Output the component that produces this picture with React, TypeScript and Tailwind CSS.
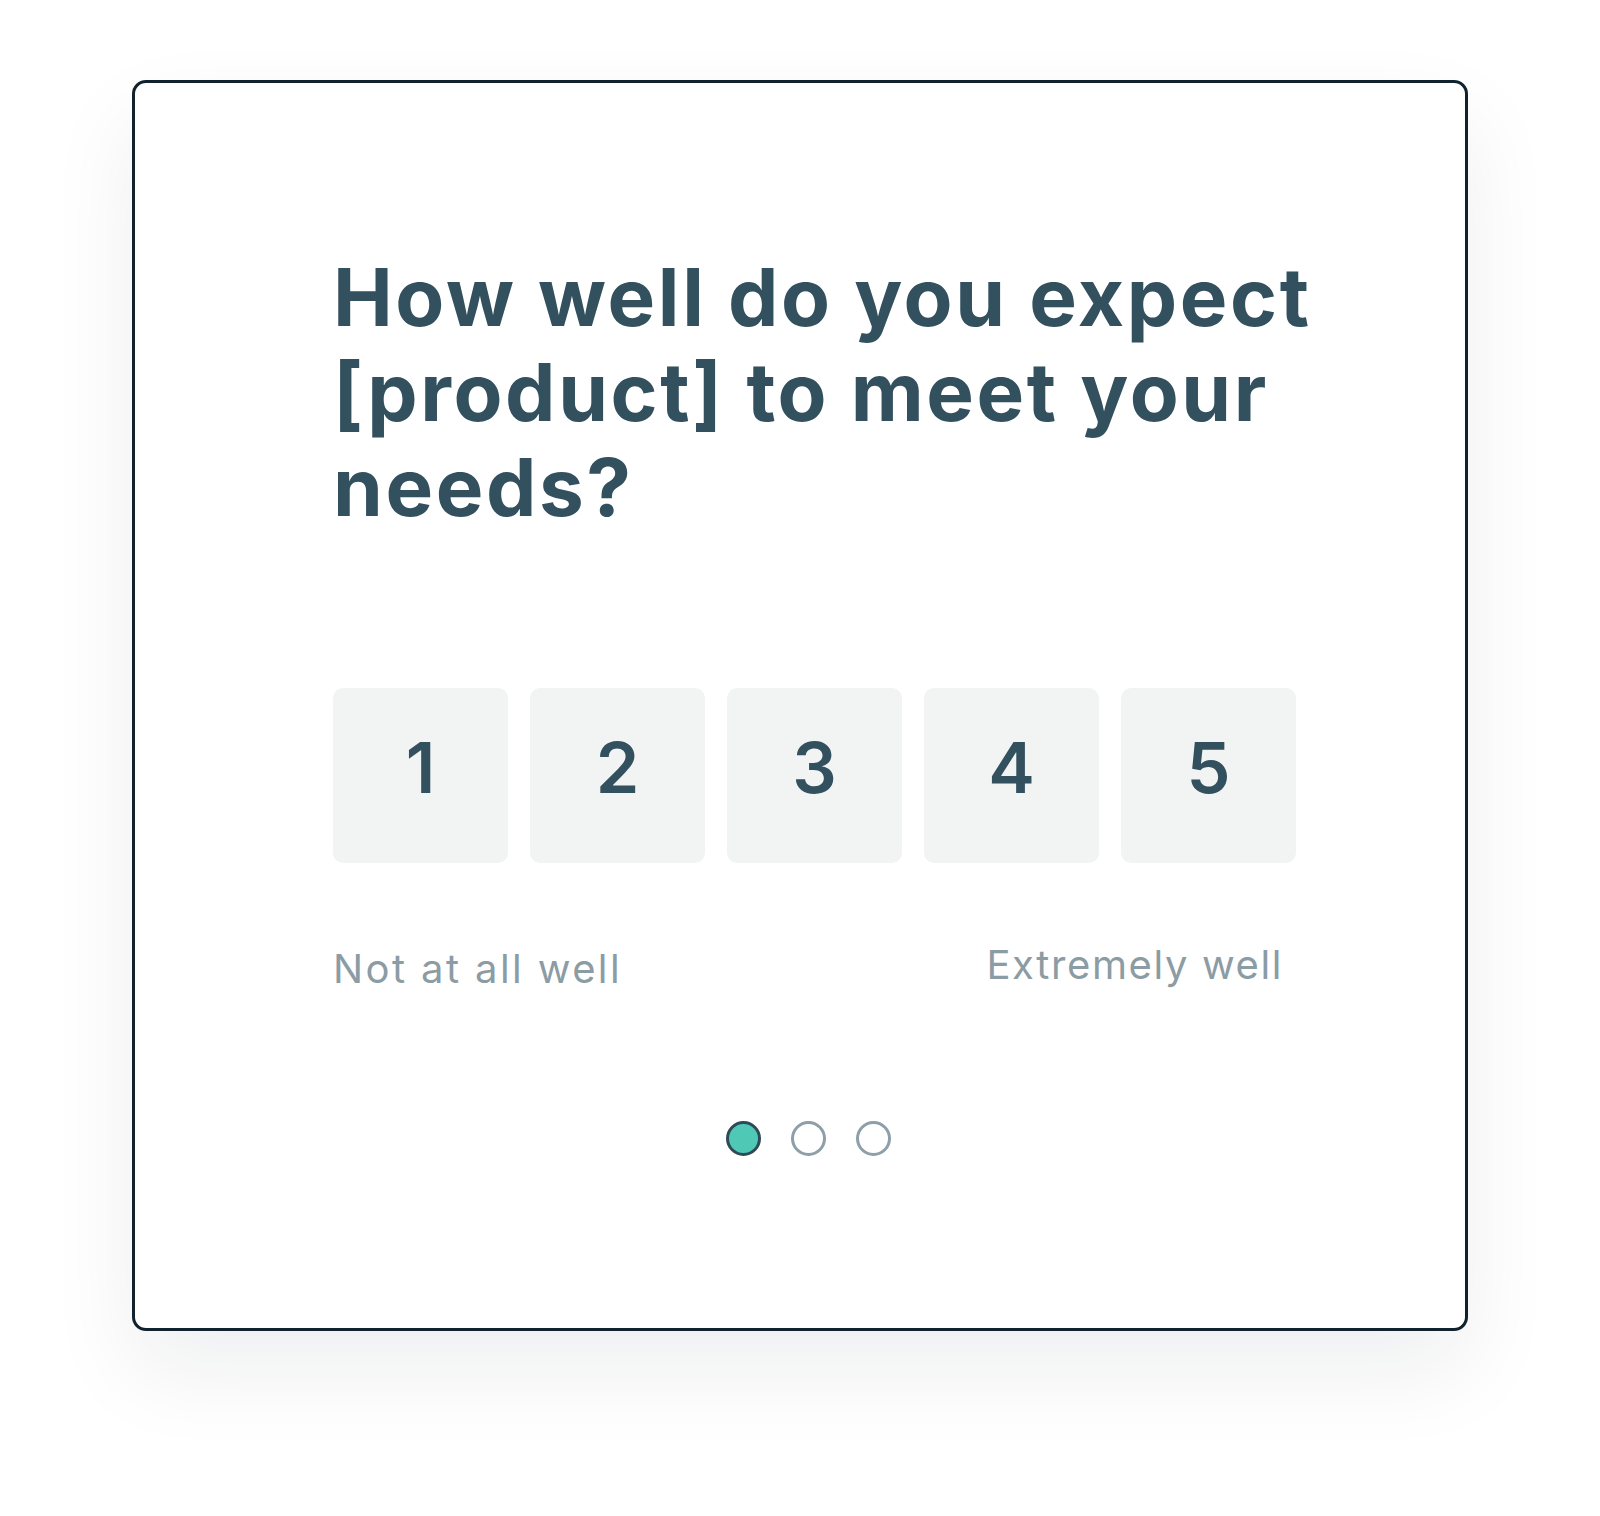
const scale = [1, 2, 3, 4, 5];

function Dots({ active = 0, count = 3 }: { active?: number; count?: number }) {
  return (
    <div className="flex items-center justify-center gap-[30px]">
      {Array.from({ length: count }).map((_, i) =>
        i === active ? (
          <span key={i} className="block h-[35px] w-[35px] rounded-full border-[3px] border-[#2e4a58] bg-[#4fc8b6]" />
        ) : (
          <span key={i} className="block h-[35px] w-[35px] rounded-full border-[3px] border-[#8d9fa8] bg-white" />
        ),
      )}
    </div>
  );
}

export default function App() {
  return (
    <div className="min-h-[1516px] w-full bg-white pl-[132px] pt-[80px] font-['Inter',sans-serif]">
      <div className="h-[1251px] w-[1336px] rounded-[14px] border-[3px] border-[#10222e] bg-white shadow-[0_40px_90px_rgba(20,30,40,0.07)]">
        <div className="ml-[198px] w-[966px] pt-[166px]">
          <h1 className="whitespace-nowrap text-[80px] font-bold leading-[95px] tracking-[2.6px] text-[#33505f]">
            How well do you expect
            <br />
            [product] to meet your
            <br />
            needs?
          </h1>

          <div className="mt-[154px] flex gap-[22px]">
            {scale.map((n) => (
              <button
                key={n}
                className="flex h-[175px] w-[175px] items-center justify-center rounded-[10px] bg-[#f2f4f4] pb-[16px] text-[70px] font-semibold text-[#33505f]"
              >
                {n}
              </button>
            ))}
          </div>

          <div className="mt-[72px] flex items-start justify-between pr-[16px] text-[40px] text-[#8c9ca5]">
            <span className="mt-[4px] tracking-[2.4px]">Not at all well</span>
            <span className="tracking-[1.6px]">Extremely well</span>
          </div>

          <div className="mt-[122px] pr-[16px]">
            <Dots />
          </div>
        </div>
      </div>
    </div>
  );
}
